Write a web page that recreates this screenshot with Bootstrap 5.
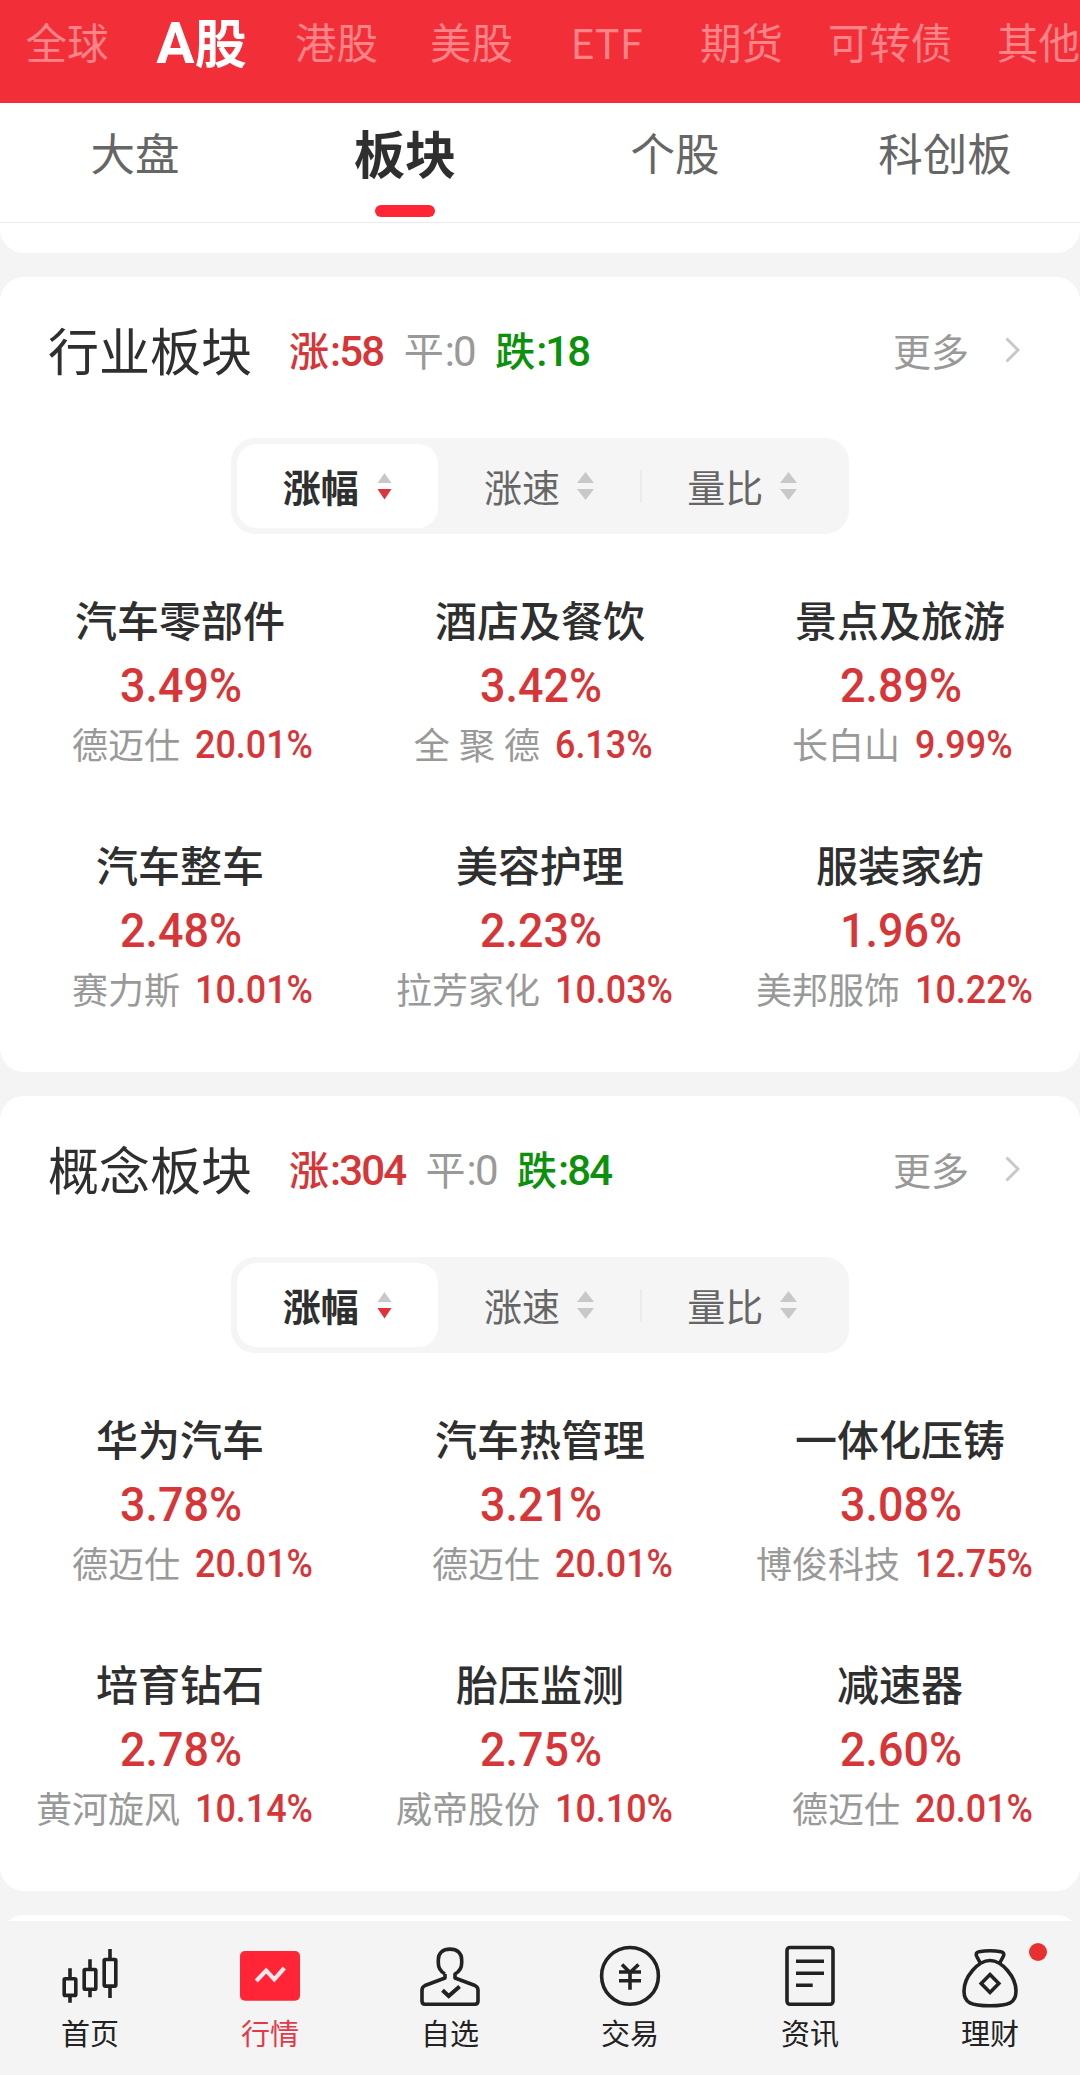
<!DOCTYPE html>
<html lang="zh-CN">
<head>
<meta charset="utf-8">
<meta name="viewport" content="width=device-width, initial-scale=1">
<title>行情 - 板块</title>
<link href="https://cdn.jsdelivr.net/npm/bootstrap@5.3.0/dist/css/bootstrap.min.css" rel="stylesheet">
<style>
  body { background:#f4f4f4; font-family:"Noto Sans CJK SC",sans-serif; color:#2f2f2f; line-height:1; }
  .page { width:1080px; height:2075px; overflow:hidden; }
  .market-nav { height:103px; background:#f22f38; }
  .market-nav a { flex:0 0 135px; font-size:41.5px; line-height:82px; color:#ff8488; white-space:nowrap; }
  .market-nav a:first-child { flex-basis:134px; }
  .market-nav a.wide { flex-basis:162px; }
  .market-nav a.active { color:#fff; font-size:52px; font-weight:700; }
  .market-nav .latin { font-family:Roboto,sans-serif; font-size:57px; }
  .sub-nav { height:120px; border-bottom:1px solid #ebebeb; }
  .sub-nav a { height:102px; line-height:98px; font-size:44.5px; color:#666; }
  .sub-nav a.active { font-size:51px; font-weight:700; color:#2f2f2f; }
  .sub-nav a.active::after { content:""; display:block; width:60px; height:12px; border-radius:6px; background:#ff2436; margin:4px auto 0; }
  .panel-end { height:30px; border-radius:0 0 24px 24px; }
  .panel { height:795px; border-radius:24px; margin-top:24px; }
  .panel-head { height:161px; padding:0 59px 15px 48px; }
  .panel-head h2 { font-size:51px; font-weight:400; line-height:60px; margin-right:37px; padding-bottom:2px; }
  .counts { font-size:40px; line-height:60px; padding-top:1px; }
  .num { font-family:Roboto,"Noto Sans CJK SC",sans-serif; }
  .counts .num { font-size:42px; letter-spacing:-1.9px; margin-left:1px; }
  .counts > span { margin-right:20.5px; }
  .rise { color:#d63638; }
  .flat { color:#999; }
  .fall { color:#0c910c; }
  .more { font-size:38px; color:#999; gap:36px; }
  .seg { width:618px; height:96px; border-radius:24px; background:#f5f5f5; padding:6px; }
  .seg > a { flex:1 1 0; font-size:38px; color:#666; gap:17px; border-radius:20px; line-height:82px; height:84px; }
  .seg > a.active { background:#fff; color:#2f2f2f; font-weight:700; }
  .seg svg { width:17px; height:28px; }
  .seg .bar { width:2px; height:33px; background:#ebebeb; }
  .sectors { padding-top:55px; row-gap:61px; }
  .cell { height:184px; }
  .cell h3 { font-size:42px; font-weight:500; line-height:60px; height:64px; margin:0; }
  .cell .big { font-size:48.5px; font-weight:500; line-height:66px; height:64px; transform:scaleX(.925); padding-left:2px; }
  .cell .pair { line-height:52px; font-size:36px; }
  .cell .pair .name { color:#999; word-spacing:1px; white-space:nowrap; }
  .cell .pair .num { font-size:39px; font-weight:500; line-height:57px; height:56px; transform:scaleX(.92); transform-origin:0 50%; margin-left:15px; }
  .panel-next { height:30px; border-radius:24px 24px 0 0; margin-top:24px; }
  .tab-bar { height:154px; margin-top:-24px; background:#f4f4f4; position:relative; padding-top:22px; }
  .tab-bar a { width:180px; font-size:29px; line-height:42px; color:#222; position:relative; }
  .tab-bar a.active { color:#e03a4a; }
  .tab-bar svg { width:64px; height:68px; fill:none; stroke:#222; stroke-width:3.6; stroke-linejoin:round; stroke-linecap:butt; }
  .dot { position:absolute; width:18px; height:18px; border-radius:50%; background:#e93030; left:129px; top:0; }
</style>
</head>
<body>
<svg class="d-none">
  <symbol id="sort" viewBox="0 0 17 28"><path d="M8.5 0 17 11H0Z" fill="#c8c8c8"/><path d="M0 17H17L8.500 28Z" fill="#c8c8c8"/></symbol>
  <symbol id="sort-down" viewBox="0 0 17 28"><path d="M8.500 1 15.500 11H1.500Z" fill="#c8c8c8"/><path d="M1.500 17H15.500L8.500 27.500Z" fill="#e03238"/></symbol>
  <symbol id="next" viewBox="0 0 16 26"><path d="M1.500 1.500 13 13 1.500 24.500" fill="none" stroke="#c8c8c8" stroke-width="3"/></symbol>
</svg>
<div class="page d-flex flex-column">
  <nav class="market-nav d-flex text-center flex-shrink-0 overflow-hidden">
    <a class="text-decoration-none">全球</a>
    <a class="text-decoration-none active"><span class="latin">A</span>股</a>
    <a class="text-decoration-none">港股</a>
    <a class="text-decoration-none">美股</a>
    <a class="text-decoration-none">ETF</a>
    <a class="text-decoration-none">期货</a>
    <a class="text-decoration-none wide">可转债</a>
    <a class="text-decoration-none">其他</a>
  </nav>
  <nav class="sub-nav d-flex bg-white text-center flex-shrink-0">
    <a class="col-3 text-decoration-none">大盘</a>
    <a class="col-3 text-decoration-none active">板块</a>
    <a class="col-3 text-decoration-none">个股</a>
    <a class="col-3 text-decoration-none">科创板</a>
  </nav>
  <div class="panel-end bg-white flex-shrink-0"></div>

  <section class="panel bg-white flex-shrink-0">
    <div class="panel-head d-flex align-items-center">
      <h2 class="mb-0">行业板块</h2>
      <div class="counts d-flex flex-grow-1">
        <span class="rise fw-medium">涨<span class="num">:58</span></span>
        <span class="flat">平<span class="num">:0</span></span>
        <span class="fall fw-medium">跌<span class="num">:18</span></span>
      </div>
      <a class="more text-decoration-none d-flex align-items-center">更多<svg width="16" height="26"><use href="#next"/></svg></a>
    </div>
    <div class="seg d-flex align-items-center mx-auto">
      <a class="active d-flex align-items-center justify-content-center text-decoration-none">涨幅<svg><use href="#sort-down"/></svg></a>
      <a class="d-flex align-items-center justify-content-center text-decoration-none">涨速<svg><use href="#sort"/></svg></a>
      <span class="bar"></span>
      <a class="d-flex align-items-center justify-content-center text-decoration-none">量比<svg><use href="#sort"/></svg></a>
    </div>
    <div class="sectors d-flex flex-wrap">
      <div class="cell col-4 text-center"><h3>汽车零部件</h3><div class="big num rise">3.49%</div><div class="pair d-flex"><span class="name col-6 text-end">德迈仕</span><span class="num rise">20.01%</span></div></div>
      <div class="cell col-4 text-center"><h3>酒店及餐饮</h3><div class="big num rise">3.42%</div><div class="pair d-flex"><span class="name col-6 text-end">全 聚 德</span><span class="num rise">6.13%</span></div></div>
      <div class="cell col-4 text-center"><h3>景点及旅游</h3><div class="big num rise">2.89%</div><div class="pair d-flex"><span class="name col-6 text-end">长白山</span><span class="num rise">9.99%</span></div></div>
      <div class="cell col-4 text-center"><h3>汽车整车</h3><div class="big num rise">2.48%</div><div class="pair d-flex"><span class="name col-6 text-end">赛力斯</span><span class="num rise">10.01%</span></div></div>
      <div class="cell col-4 text-center"><h3>美容护理</h3><div class="big num rise">2.23%</div><div class="pair d-flex"><span class="name col-6 text-end">拉芳家化</span><span class="num rise">10.03%</span></div></div>
      <div class="cell col-4 text-center"><h3>服装家纺</h3><div class="big num rise">1.96%</div><div class="pair d-flex"><span class="name col-6 text-end">美邦服饰</span><span class="num rise">10.22%</span></div></div>
    </div>
  </section>

  <section class="panel bg-white flex-shrink-0">
    <div class="panel-head d-flex align-items-center">
      <h2 class="mb-0">概念板块</h2>
      <div class="counts d-flex flex-grow-1">
        <span class="rise fw-medium">涨<span class="num">:304</span></span>
        <span class="flat">平<span class="num">:0</span></span>
        <span class="fall fw-medium">跌<span class="num">:84</span></span>
      </div>
      <a class="more text-decoration-none d-flex align-items-center">更多<svg width="16" height="26"><use href="#next"/></svg></a>
    </div>
    <div class="seg d-flex align-items-center mx-auto">
      <a class="active d-flex align-items-center justify-content-center text-decoration-none">涨幅<svg><use href="#sort-down"/></svg></a>
      <a class="d-flex align-items-center justify-content-center text-decoration-none">涨速<svg><use href="#sort"/></svg></a>
      <span class="bar"></span>
      <a class="d-flex align-items-center justify-content-center text-decoration-none">量比<svg><use href="#sort"/></svg></a>
    </div>
    <div class="sectors d-flex flex-wrap">
      <div class="cell col-4 text-center"><h3>华为汽车</h3><div class="big num rise">3.78%</div><div class="pair d-flex"><span class="name col-6 text-end">德迈仕</span><span class="num rise">20.01%</span></div></div>
      <div class="cell col-4 text-center"><h3>汽车热管理</h3><div class="big num rise">3.21%</div><div class="pair d-flex"><span class="name col-6 text-end">德迈仕</span><span class="num rise">20.01%</span></div></div>
      <div class="cell col-4 text-center"><h3>一体化压铸</h3><div class="big num rise">3.08%</div><div class="pair d-flex"><span class="name col-6 text-end">博俊科技</span><span class="num rise">12.75%</span></div></div>
      <div class="cell col-4 text-center"><h3>培育钻石</h3><div class="big num rise">2.78%</div><div class="pair d-flex"><span class="name col-6 text-end">黄河旋风</span><span class="num rise">10.14%</span></div></div>
      <div class="cell col-4 text-center"><h3>胎压监测</h3><div class="big num rise">2.75%</div><div class="pair d-flex"><span class="name col-6 text-end">威帝股份</span><span class="num rise">10.10%</span></div></div>
      <div class="cell col-4 text-center"><h3>减速器</h3><div class="big num rise">2.60%</div><div class="pair d-flex"><span class="name col-6 text-end">德迈仕</span><span class="num rise">20.01%</span></div></div>
    </div>
  </section>

  <div class="panel-next bg-white flex-shrink-0"></div>

  <nav class="tab-bar d-flex flex-shrink-0">
    <a class="d-flex flex-column align-items-center text-decoration-none">
      <svg viewBox="0 0 64 68"><rect x="6.200" y="35.800" width="11.600" height="16.600" rx="1"/><path d="M12 25.300V35M12 53V59.700M32 16.300V26M32 47V54.300M52 6V16M52 43V55"/><rect x="26.200" y="26.500" width="11.600" height="19.800" rx="1"/><rect x="46.200" y="16.500" width="11.600" height="26.600" rx="1"/></svg>首页</a>
    <a class="active d-flex flex-column align-items-center text-decoration-none">
      <svg viewBox="0 0 64 68"><rect x="2" y="8" width="60" height="49.700" rx="5" fill="#ff2436" stroke="none"/><path d="M18.200 38 28.200 27.500 36.300 36.300 46.300 25" stroke="#ffe6ea" stroke-width="4.200" stroke-linejoin="miter"/></svg>行情</a>
    <a class="d-flex flex-column align-items-center text-decoration-none">
      <svg viewBox="0 0 64 68"><path d="M27 31V35L7 42.500Q4 44 4 47V58Q4 61.200 7 61.200H57Q60 61.200 60 58V47Q60 44 57 42.500L37 35V31C41.500 28.500 43.700 25 43.700 20V17C43.700 10 39 6.100 32 6.100S20.300 10 20.300 17V20C20.300 25 22.500 28.500 27 31"/><path d="M24.500 47.300 30.700 53 41.600 43.500" stroke-width="4" stroke-linejoin="miter"/></svg>自选</a>
    <a class="d-flex flex-column align-items-center text-decoration-none">
      <svg viewBox="0 0 64 68"><circle cx="32" cy="32.900" r="28.400"/><path d="M24 21.500 32 29.500 40.500 21.500M32 29V46.700M21 29H43M21 37.700H43"/></svg>交易</a>
    <a class="d-flex flex-column align-items-center text-decoration-none">
      <svg viewBox="0 0 64 68"><rect x="9" y="4.500" width="46" height="56.800" rx="3"/><path d="M18 18.300H46M18 30.300H46M18 42.200H34.700"/></svg>资讯</a>
    <a class="d-flex flex-column align-items-center text-decoration-none">
      <svg viewBox="0 0 64 68"><path d="M32 17.500C44 17.500 58 34 58 48C58 60 51 62.800 32 62.800S6 60 6 48C6 34 20 17.500 32 17.500ZM22 19.500 18.800 13.500Q17 9.500 21 8.700Q32 6.900 43 8.700Q47 9.500 45.200 13.500L42 19.500"/><path d="M32 31.500 40.800 40.500 32 49.500 23.200 40.500Z" stroke-linejoin="miter"/></svg>理财<span class="dot"></span></a>
  </nav>
</div>
<script src="https://cdn.jsdelivr.net/npm/bootstrap@5.3.0/dist/js/bootstrap.bundle.min.js"></script>
</body>
</html>
